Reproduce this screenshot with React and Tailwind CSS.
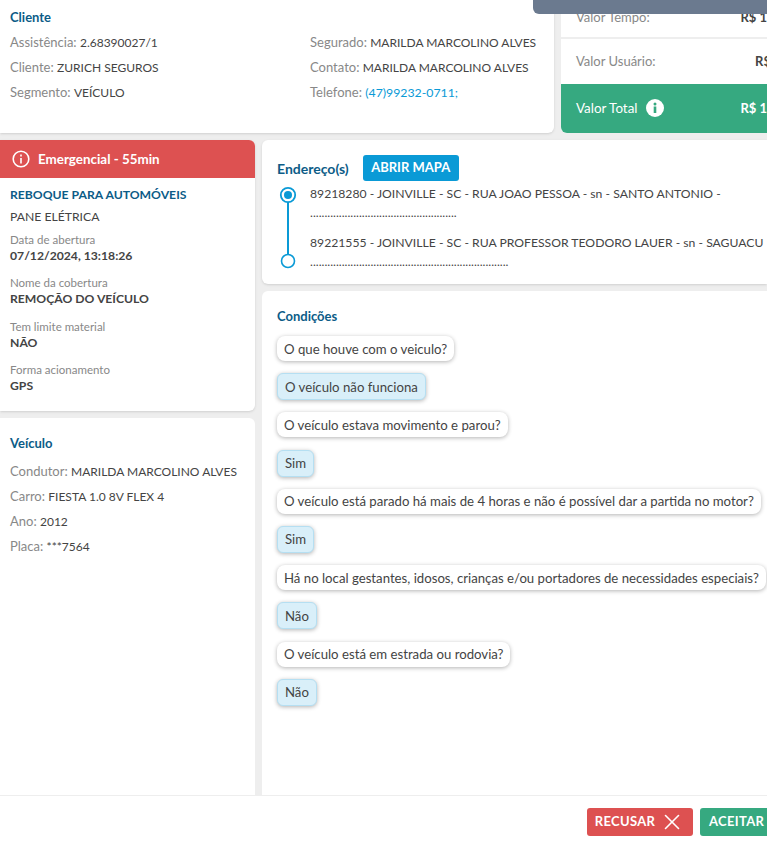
import React from 'react';
import { X } from 'lucide-react';

const font = "font-['Lato',sans-serif]";

const Field = ({ label, children }) => (
  <p className="whitespace-nowrap leading-[25px] text-[#888888]">
    {label}: <span className="text-[12px] text-[#444444]">{children}</span>
  </p>
);

const Question = ({ children }) => (
  <div className="w-fit whitespace-nowrap rounded-lg bg-white px-[7px] py-[2.5px] text-[13.2px] leading-[20px] text-[#444444] shadow-[0_1px_4px_rgba(0,0,0,0.3)]">
    {children}
  </div>
);

const Answer = ({ children }) => (
  <div className="w-fit whitespace-nowrap rounded-md border border-[#b5dff2] bg-[#d9eff9] px-[7px] py-[2.5px] text-[13.2px] leading-[20px] text-[#444444] shadow-[0_1px_4px_rgba(0,0,0,0.3)]">
    {children}
  </div>
);

const Small = ({ label, value }) => (
  <div>
    <p className="text-[11.5px] leading-[15px] text-[#888888]">{label}</p>
    <p className="text-[12.2px] font-bold leading-[17px] text-[#444444]">{value}</p>
  </div>
);

export default function App() {
  return (
    <div className={`${font} relative flex h-[845px] w-[767px] flex-col overflow-hidden bg-[#eeeeee] text-[13px]`}>
      <div className="absolute right-0 top-0 z-10 h-[14px] w-[234px] rounded-bl-md bg-[#6b7a8f]"></div>

      <div className="flex gap-[7px]">
        <div className="h-[133px] w-[554px] shrink-0 rounded-br-md bg-white px-[10px] pt-[7px] shadow-sm">
          <h2 className="font-bold leading-[20px] text-[#0c5c87]">Cliente</h2>
          <div className="mt-[3px] flex">
            <div className="w-[300px] shrink-0">
              <Field label="Assistência">2.68390027/1</Field>
              <Field label="Cliente">ZURICH SEGUROS</Field>
              <Field label="Segmento">VEÍCULO</Field>
            </div>
            <div>
              <Field label="Segurado">MARILDA MARCOLINO ALVES</Field>
              <Field label="Contato">MARILDA MARCOLINO ALVES</Field>
              <p className="leading-[25px] text-[#888888]">
                Telefone: <span className="text-[12.3px] text-[#0a9ad6]">(47)99232-0711;</span>
              </p>
            </div>
          </div>
        </div>

        <div className="flex h-[133px] flex-1 flex-col overflow-hidden rounded-bl-md bg-white">
          <div className="flex h-[39px] shrink-0 items-end justify-between whitespace-nowrap border-b-2 border-[#eeeeee] pb-[11px] pl-[15px] leading-[18px] text-[#888888]">
            Valor Tempo:
            <span className="font-bold text-[#444444]">R$ 1</span>
          </div>
          <div className="flex h-[45px] shrink-0 items-center justify-between whitespace-nowrap pl-[15px] text-[#888888]">
            Valor Usuário:
            <span className="-mr-[4px] font-bold text-[#444444]">R$</span>
          </div>
          <div className="flex flex-1 items-center justify-between whitespace-nowrap bg-[#36a980] pl-[15px] text-white">
            <span className="flex items-center gap-[9px] text-[13.4px]">
              Valor Total
              <svg width="18" height="18" viewBox="0 0 18 18">
                <circle cx="9" cy="9" r="9" fill="white" />
                <rect x="7.7" y="7.5" width="2.6" height="6.5" fill="#36a980" />
                <circle cx="9" cy="4.9" r="1.5" fill="#36a980" />
              </svg>
            </span>
            <span className="font-bold">R$ 1</span>
          </div>
        </div>
      </div>

      <div className="mt-[7px] flex min-h-0 flex-1 gap-[7px]">
        <div className="flex w-[255px] shrink-0 flex-col gap-[7px]">
          <div className="h-[271px] rounded-r-md bg-white shadow-sm">
            <div className="flex h-[38px] items-center gap-[8px] rounded-tr-md bg-[#dd5151] pl-[12px] text-[13.4px] font-bold text-white">
              <svg width="18" height="18" viewBox="0 0 18 18" fill="none" stroke="white" strokeWidth="1.6">
                <circle cx="9" cy="9" r="7.8" />
                <path d="M9 8v5.4M9 4.6v1.8" />
              </svg>
              Emergencial - 55min
            </div>
            <div className="px-[10px] pt-[8px]">
              <p className="text-[12.2px] font-bold leading-[17px] text-[#0c5c87]">REBOQUE PARA AUTOMÓVEIS</p>
              <p className="mt-[5px] text-[12.2px] leading-[17px] text-[#444444]">PANE ELÉTRICA</p>
              <div className="mt-[7px] flex flex-col gap-[11.3px]">
                <Small label="Data de abertura" value="07/12/2024, 13:18:26" />
                <Small label="Nome da cobertura" value="REMOÇÃO DO VEÍCULO" />
                <Small label="Tem limite material" value="NÃO" />
                <Small label="Forma acionamento" value="GPS" />
              </div>
            </div>
          </div>
          <div className="flex-1 rounded-tr-md bg-white px-[10px] pt-[15px]">
            <h2 className="font-bold leading-[20px] text-[#0c5c87]">Veículo</h2>
            <div className="mt-[6px]">
              <Field label="Condutor">MARILDA MARCOLINO ALVES</Field>
              <Field label="Carro">FIESTA 1.0 8V FLEX 4</Field>
              <Field label="Ano">2012</Field>
              <Field label="Placa">***7564</Field>
            </div>
          </div>
        </div>

        <div className="flex min-w-0 flex-1 flex-col gap-[7px]">
          <div className="h-[144px] rounded-l-md bg-white pl-[15px] pt-[15px] shadow-sm">
            <div className="flex items-center gap-[14px]">
              <h2 className="text-[14px] font-bold text-[#0c5c87]">Endereço(s)</h2>
              <span className="flex h-[26px] w-[96px] items-center justify-center rounded-[3px] bg-[#0a9ad6] font-bold text-white">ABRIR MAPA</span>
            </div>
            <div className="mt-[1px] flex">
              <svg width="18" height="84" viewBox="0 0 18 84" className="ml-[2px] mt-[4px] shrink-0" fill="none" stroke="#0a9ad6">
                <path d="M9 16v54" strokeWidth="2" />
                <circle cx="9" cy="9" r="7.2" strokeWidth="1.8" />
                <circle cx="9" cy="9" r="4" fill="#0a9ad6" stroke="none" />
                <circle cx="9" cy="75" r="6.5" fill="white" strokeWidth="1.6" />
              </svg>
              <div className="ml-[13px] whitespace-nowrap pt-[1px] text-[12.2px] leading-[21px] text-[#444444]">
                <p>89218280 - JOINVILLE - SC - RUA JOAO PESSOA - sn - SANTO ANTONIO -</p>
                <p className="-mt-[2px]">...................................................</p>
                <p className="mt-[9px]">89221555 - JOINVILLE - SC - RUA PROFESSOR TEODORO LAUER - sn - SAGUACU</p>
                <p className="-mt-[2px]">.....................................................................</p>
              </div>
            </div>
          </div>

          <div className="min-h-0 flex-1 overflow-hidden rounded-tl-md bg-white pl-[15px] pt-[15px]">
            <h2 className="font-bold leading-[20px] text-[#0c5c87]">Condições</h2>
            <div className="mt-[10px] flex flex-col gap-[12.2px]">
              <Question>O que houve com o veiculo?</Question>
              <Answer>O veículo não funciona</Answer>
              <Question>O veículo estava movimento e parou?</Question>
              <Answer>Sim</Answer>
              <Question>O veículo está parado há mais de 4 horas e não é possível dar a partida no motor?</Question>
              <Answer>Sim</Answer>
              <Question>Há no local gestantes, idosos, crianças e/ou portadores de necessidades especiais?</Question>
              <Answer>Não</Answer>
              <Question>O veículo está em estrada ou rodovia?</Question>
              <Answer>Não</Answer>
            </div>
          </div>
        </div>
      </div>

      <div className="flex h-[50px] shrink-0 items-start justify-end gap-[7px] border-t border-[#eeeeee] bg-white pt-[12px]">
        <button className="flex h-[28px] w-[106px] items-center justify-center gap-[4px] rounded-[3px] bg-[#dd5151] font-bold tracking-wide text-white">
          RECUSAR
          <X size={26} strokeWidth={1.5} />
        </button>
        <button className="h-[28px] w-[67px] overflow-hidden whitespace-nowrap rounded-l-[3px] bg-[#36a980] pl-[9px] text-left font-bold tracking-wide text-white">
          ACEITAR
        </button>
      </div>
    </div>
  );
}
